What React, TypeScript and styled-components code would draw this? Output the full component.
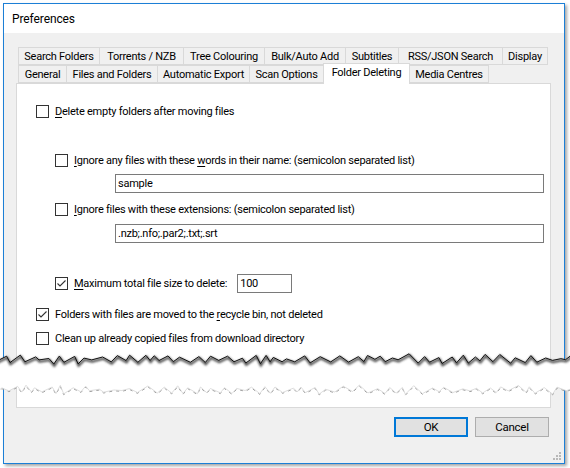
import React from "react";
import styled, { createGlobalStyle } from "styled-components";

const GlobalStyle = createGlobalStyle`
  html, body { margin: 0; padding: 0; background: #ffffff; }
  body { font-family: Roboto, "Liberation Sans", sans-serif; font-size: 11px; letter-spacing: -0.25px; color: #000; }
`;

const Page = styled.div`
  position: relative;
  width: 570px;
  height: 468px;
  padding: 3px 0 0 3px;
  box-sizing: border-box;
  overflow: hidden;
`;

const Window = styled.div`
  position: relative;
  width: 562px;
  height: 461px;
  box-sizing: border-box;
  border: 1px solid #1c7fd6;
  background: #f0f0f0;
  box-shadow: 2px 2px 3px rgba(0, 0, 0, 0.35);
  display: flex;
  flex-direction: column;
`;

const TitleBar = styled.div`
  height: 29px;
  background: #ffffff;
  display: flex;
  align-items: center;
  padding-left: 8px;
  font-size: 12px;
  letter-spacing: -0.1px;
`;

const Body = styled.div`
  flex: 1;
  display: flex;
  flex-direction: column;
  padding: 15px 13px 25px 12px;
`;

const TabRow = styled.div<{ $h: number }>`
  display: flex;
  align-items: flex-end;
  height: ${(p) => p.$h}px;
  padding-left: 3px;
`;

const Tab = styled.div<{ $w: number; $active?: boolean }>`
  position: relative;
  z-index: ${(p) => (p.$active ? 2 : 1)};
  width: ${(p) => p.$w}px;
  height: ${(p) => (p.$active ? 21 : 18)}px;
  margin-left: -1px;
  margin-bottom: ${(p) => (p.$active ? -1 : 0)}px;
  box-sizing: border-box;
  border: 1px solid #d9d9d9;
  border-bottom: ${(p) => (p.$active ? "none" : "1px solid #d9d9d9")};
  background: ${(p) => (p.$active ? "#ffffff" : "#f0f0f0")};
  display: flex;
  align-items: ${(p) => (p.$active ? "flex-start" : "center")};
  padding-top: ${(p) => (p.$active ? 2 : 0)}px;
  justify-content: center;
  white-space: nowrap;
`;

const Panel = styled.div`
  height: 325px;
  box-sizing: border-box;
  border: 1px solid #d9d9d9;
  background: #ffffff;
  display: flex;
  flex-direction: column;
  padding-left: 19px;
`;

const Row = styled.div<{ $top: number; $indent?: number; $h?: number }>`
  display: flex;
  align-items: center;
  margin-top: ${(p) => p.$top}px;
  margin-left: ${(p) => p.$indent ?? 0}px;
  height: ${(p) => p.$h ?? 13}px;
`;

const Box = styled.span`
  width: 13px;
  height: 13px;
  box-sizing: border-box;
  border: 1px solid #333333;
  background: #ffffff;
  display: inline-flex;
  flex: none;
`;

const Label = styled.span`
  margin-left: 6px;
  white-space: nowrap;
  line-height: 13px;
`;

const Key = styled.span`
  text-decoration: underline;
  text-underline-offset: 2px;
`;

const TextBox = styled.div<{ $w: number; $ml?: number }>`
  width: ${(p) => p.$w}px;
  height: 19px;
  margin-left: ${(p) => p.$ml ?? 0}px;
  box-sizing: border-box;
  border: 1px solid #7a7a7a;
  background: #ffffff;
  display: flex;
  align-items: center;
  padding-left: 2px;
  white-space: nowrap;
`;

const ButtonBar = styled.div`
  display: flex;
  justify-content: flex-end;
  gap: 7px;
  margin-top: 9px;
  padding-right: 2px;
`;

const Button = styled.div<{ $default?: boolean }>`
  width: 74px;
  height: 20px;
  box-sizing: border-box;
  border: ${(p) => (p.$default ? "2px solid #0078d7" : "1px solid #adadad")};
  background: #e1e1e1;
  display: flex;
  align-items: center;
  justify-content: center;
  font-size: 11.5px;
`;

const Grip = styled.svg`
  position: absolute;
  right: 2px;
  bottom: 2px;
`;

const Overlay = styled.svg`
  position: absolute;
  left: 0;
  top: 0;
  pointer-events: none;
`;

function Check({ checked }: { checked?: boolean }) {
  return (
    <Box>
      {checked && (
        <svg width="11" height="11" viewBox="0 0 11 11">
          <polyline points="1.5,5.5 4,8 9.5,2.5" fill="none" stroke="#333" strokeWidth="1.1" />
        </svg>
      )}
    </Box>
  );
}

function jag(seed: number, base: number, amp: number): [number, number][] {
  let s = seed;
  const rnd = () => {
    s = (s * 16807) % 2147483647;
    return s / 2147483647;
  };
  const pts: [number, number][] = [];
  let x = -4;
  let up = false;
  while (x <= 576) {
    const y = base + (up ? -1 : 1) * amp * (0.3 + 0.7 * rnd()) + (rnd() - 0.5) * 3;
    pts.push([x, y]);
    x += 3 + rnd() * 8;
    up = !up;
  }
  return pts;
}

const upper = jag(12345, 359, 4);
const lower = jag(98765, 390, 4);
const str = (p: [number, number][]) => p.map(([x, y]) => `${x.toFixed(1)},${y.toFixed(1)}`).join(" ");
const gapPoly = str(upper) + " " + str([...lower].reverse());

function Tear() {
  return (
    <Overlay width="570" height="468" viewBox="0 0 570 468">
      <defs>
        <filter id="b1" x="-5%" y="-50%" width="110%" height="200%">
          <feGaussianBlur stdDeviation="0.9" />
        </filter>
        <filter id="b2" x="-5%" y="-50%" width="110%" height="200%">
          <feGaussianBlur stdDeviation="0.5" />
        </filter>
      </defs>
      <polygon points={gapPoly} fill="#ffffff" />
      <polyline points={str(upper.map(([x, y]) => [x + 0.5, y + 1.6]))} fill="none" stroke="#444" strokeWidth="2.2" filter="url(#b1)" />
      <polyline points={str(upper)} fill="none" stroke="#111" strokeWidth="1" />
      <polyline points={str(lower.map(([x, y]) => [x, y + 0.8]))} fill="none" stroke="#999" strokeWidth="1" strokeDasharray="3 4" filter="url(#b2)" />
      <polyline points={str(lower)} fill="none" stroke="#d4d4d4" strokeWidth="0.8" />
    </Overlay>
  );
}

const row1 = [
  { t: "Search Folders", w: 82 },
  { t: "Torrents / NZB", w: 85 },
  { t: "Tree Colouring", w: 82 },
  { t: "Bulk/Auto Add", w: 82 },
  { t: "Subtitles", w: 54 },
  { t: "RSS/JSON Search", w: 105 },
  { t: "Display", w: 46 },
];

const row2 = [
  { t: "General", w: 49 },
  { t: "Files and Folders", w: 92 },
  { t: "Automatic Export", w: 93 },
  { t: "Scan Options", w: 75 },
  { t: "Folder Deleting", w: 87, active: true },
  { t: "Media Centres", w: 80 },
];

export default function App() {
  return (
    <>
      <GlobalStyle />
      <Page>
        <Window>
          <TitleBar>Preferences</TitleBar>
          <Body>
            <TabRow $h={17}>
              {row1.map((t) => (
                <Tab key={t.t} $w={t.w}>{t.t}</Tab>
              ))}
            </TabRow>
            <TabRow $h={18}>
              {row2.map((t) => (
                <Tab key={t.t} $w={t.w} $active={t.active}>{t.t}</Tab>
              ))}
            </TabRow>
            <Panel>
              <Row $top={21}>
                <Check />
                <Label><Key>D</Key>elete empty folders after moving files</Label>
              </Row>
              <Row $top={36} $indent={19}>
                <Check />
                <Label><Key>I</Key>gnore any files with these <Key>w</Key>ords in their name: (semicolon separated list)</Label>
              </Row>
              <Row $top={7} $indent={79} $h={19}>
                <TextBox $w={429}>sample</TextBox>
              </Row>
              <Row $top={10} $indent={19}>
                <Check />
                <Label><Key>I</Key>gnore files with these extensions: (semicolon separated list)</Label>
              </Row>
              <Row $top={8} $indent={79} $h={19}>
                <TextBox $w={429}>.nzb;.nfo;.par2;.txt;.srt</TextBox>
              </Row>
              <Row $top={31} $indent={19} $h={19}>
                <Check checked />
                <Label><Key>M</Key>aximum total file size to delete:</Label>
                <TextBox $w={55} $ml={10}>100</TextBox>
              </Row>
              <Row $top={15}>
                <Check checked />
                <Label>Folders with files are moved to the <Key>r</Key>ecycle bin, not deleted</Label>
              </Row>
              <Row $top={11}>
                <Check />
                <Label>Clean up already copied files from download directory</Label>
              </Row>
            </Panel>
            <ButtonBar>
              <Button $default>OK</Button>
              <Button>Cancel</Button>
            </ButtonBar>
          </Body>
          <Grip width="10" height="10" viewBox="0 0 10 10">
            {[
              [8, 2], [8, 5], [5, 5], [8, 8], [5, 8], [2, 8],
            ].map(([x, y]) => (
              <rect key={`${x}-${y}`} x={x - 1} y={y - 1} width="2" height="2" fill="#b8b8b8" />
            ))}
          </Grip>
        </Window>
        <Tear />
      </Page>
    </>
  );
}
